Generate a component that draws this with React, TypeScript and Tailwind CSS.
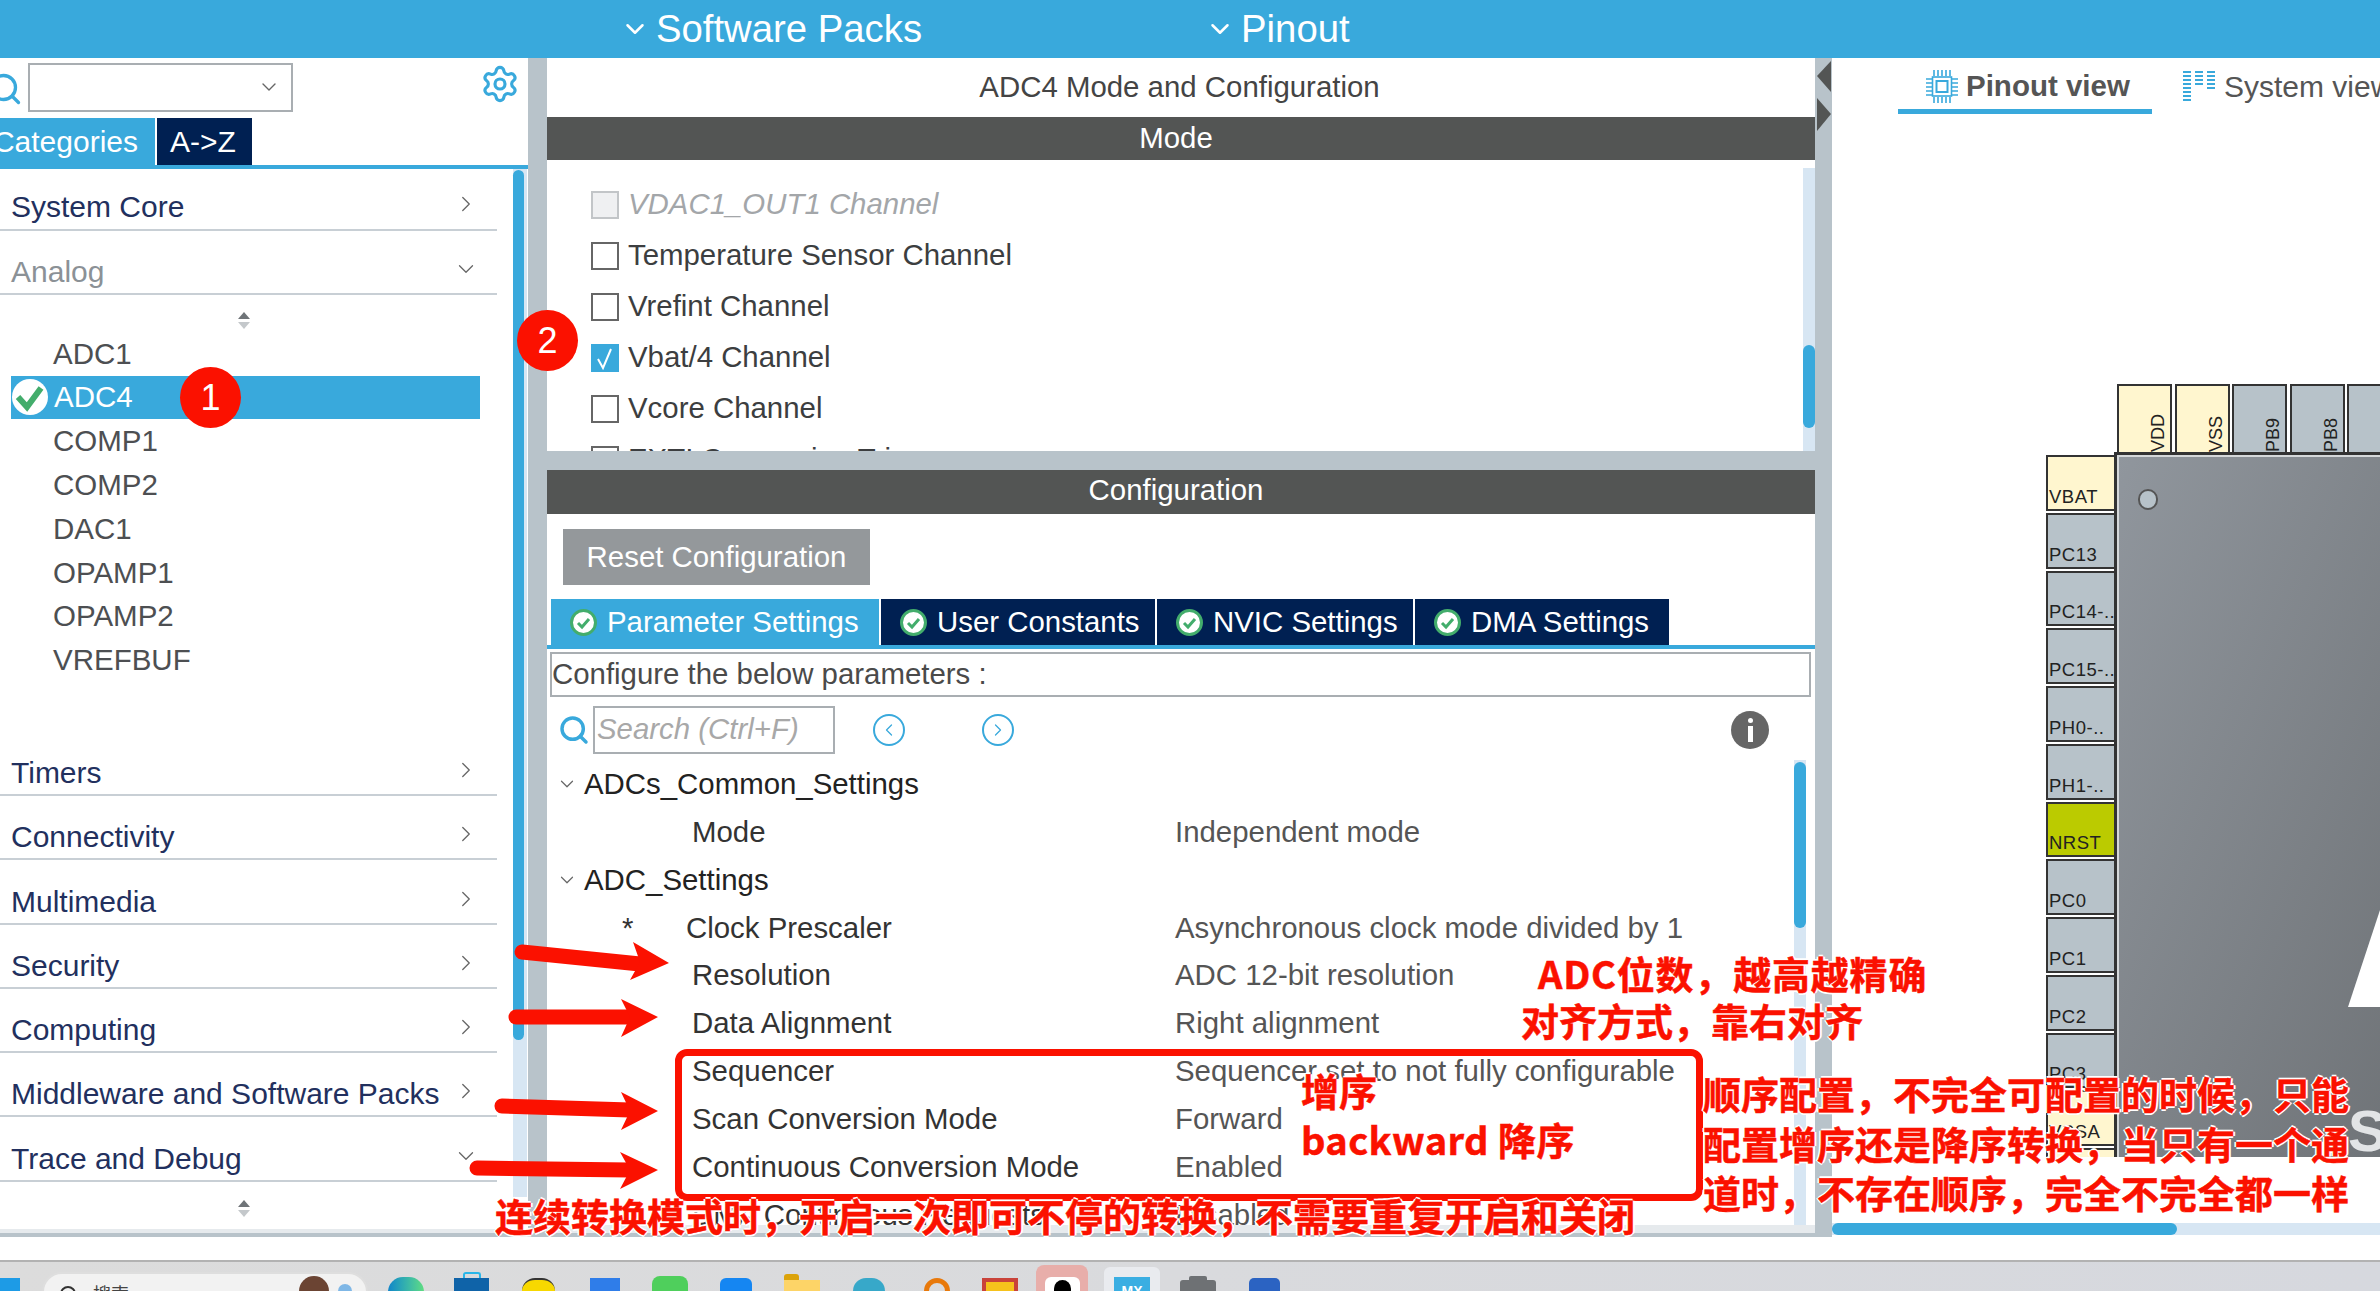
import React from 'react';
import { ChevronDown, ChevronLeft, ChevronRight, Search, Settings } from 'lucide-react';

const categories = ['Timers', 'Connectivity', 'Multimedia', 'Security', 'Computing', 'Middleware and Software Packs'];
const adcItems = ['ADC1', 'ADC4', 'COMP1', 'COMP2', 'DAC1', 'OPAMP1', 'OPAMP2', 'VREFBUF'];
const modeRows = ['Temperature Sensor Channel', 'Vrefint Channel', 'Vbat/4 Channel', 'Vcore Channel', 'EXTI Conversion Trigger'];
const leftPins = ['VBAT', 'PC13', 'PC14-..', 'PC15-..', 'PH0-..', 'PH1-..', 'NRST', 'PC0', 'PC1', 'PC2', 'PC3', 'VSSA', 'VDDA'];
const topPins = ['VDD', 'VSS', 'PB9', 'PB8', ''];
const paramRows = [
  { name: 'Resolution', value: 'ADC 12-bit resolution' },
  { name: 'Data Alignment', value: 'Right alignment' },
  { name: 'Sequencer', value: 'Sequencer set to not fully configurable' },
  { name: 'Scan Conversion Mode', value: 'Forward' },
  { name: 'Continuous Conversion Mode', value: 'Enabled' },
  { name: 'DMA Continuous Requests', value: 'Disabled' },
];

const SortArrows = () => (
  <svg width="14" height="17" viewBox="0 0 14 17">
    <polygon points="7,0 13,7 1,7" fill="#6f7478" />
    <polygon points="7,17 13,10 1,10" fill="#c4c8cb" />
  </svg>
);

const OkIcon = ({ size = 27 }: { size?: number }) => (
  <svg width={size} height={size} viewBox="0 0 27 27" className="shrink-0">
    <circle cx="13.5" cy="13.5" r="12" fill="#fff" stroke="#43ad6c" strokeWidth="3" />
    <path d="M8 14l4 4 7-8" fill="none" stroke="#43ad6c" strokeWidth="3" />
  </svg>
);

const Category = ({ label, first, open, muted }: { label: string; first?: boolean; open?: boolean; muted?: boolean }) => (
  <div className={`flex items-end justify-between border-b-2 border-[#c8cfd5] pl-[11px] pr-[18px] ${first ? 'h-[61.5px] pb-[5px]' : 'h-[64.3px] pb-[4px]'}`}>
    <span className={`text-[30px] leading-[34px] ${muted ? 'text-[#8b9196]' : 'text-[#22305e]'}`}>{label}</span>
    {open ? (
      <ChevronDown size={26} strokeWidth={1.2} className="mb-[7px] text-[#666]" />
    ) : (
      <ChevronRight size={26} strokeWidth={1.2} className="mb-[7px] text-[#666]" />
    )}
  </div>
);

const Sidebar = () => (
  <div className="flex w-[528px] shrink-0 flex-col overflow-hidden bg-white">
    <div className="flex h-[60px] items-center">
      <Search size={36} strokeWidth={2.2} className="-ml-[13px] mt-[2px] text-[#39a9dc]" />
      <div className="ml-[5px] -mt-[2px] flex h-[49px] w-[265px] items-center justify-end border-2 border-[#a9aeb2] pr-[10px]">
        <ChevronDown size={24} strokeWidth={1.4} className="text-[#666]" />
      </div>
      <Settings size={40} strokeWidth={1.9} className="ml-[187px] -mt-[8px] text-[#39a9dc]" />
    </div>
    <div className="flex h-[47px] text-[30px] leading-[47px] text-white">
      <div className="flex w-[155px] justify-end bg-[#39a9dc] pr-[17px]">Categories</div>
      <div className="ml-[2px] w-[95px] bg-[#002052] pr-[3px] text-center">A-&gt;Z</div>
    </div>
    <div className="h-[4px] bg-[#39a9dc]" />
    <div className="flex min-h-0 flex-1">
      <div className="w-[497px] shrink-0">
        <Category label="System Core" first />
        <Category label="Analog" open muted />
        <div className="flex h-[37px] justify-center pt-[17px]">
          <div className="-ml-[10px]"><SortArrows /></div>
        </div>
        {adcItems.map((item) =>
          item === 'ADC4' ? (
            <div key={item} className="ml-[11px] flex h-[43.8px] w-[469px] items-center bg-[#39a9dc] text-[29.5px] text-white">
              <svg width="36" height="36" viewBox="0 0 36 36" className="ml-[1px]">
                <circle cx="18" cy="18" r="18" fill="#fff" />
                <path d="M6 18l9 10L29 9" fill="none" stroke="#43ad6c" strokeWidth="6" />
              </svg>
              <span className="ml-[6px]">{item}</span>
            </div>
          ) : (
            <div key={item} className="flex h-[43.8px] items-center pl-[53px] text-[29.5px] text-[#4d4f52]">
              {item}
            </div>
          )
        )}
        <div className="h-[49.5px]" />
        {categories.map((c) => (
          <Category key={c} label={c} />
        ))}
        <Category label="Trace and Debug" open />
        <div className="flex justify-center pt-[18px]">
          <div className="-ml-[10px]"><SortArrows /></div>
        </div>
      </div>
      <div className="relative ml-[16px] h-[1028px] w-[14px] bg-[#d7e6f3]">
        <div className="mt-[1px] h-[870px] w-[11px] rounded-full bg-[#39a9dc]" />
      </div>
    </div>
    <div className="h-[4px] bg-[#e6eaed]" />
    <div className="h-[4px] bg-[#b8c3ca]" />
  </div>
);

const ModeCheck = ({ label, state }: { label: string; state?: 'on' | 'off' }) => (
  <div className="flex h-[51px] items-center pl-[44px]">
    {state === 'on' ? (
      <div className="flex h-[28px] w-[28px] items-center justify-center bg-[#39a9dc]">
        <svg width="20" height="24" viewBox="0 0 20 24">
          <path d="M3 13l5 9L16 3" fill="none" stroke="#fff" strokeWidth="2" />
        </svg>
      </div>
    ) : (
      <div className="h-[28px] w-[28px] border-2 border-[#666]" />
    )}
    <span className="ml-[9px] text-[29.4px] text-[#3c3e40]">{label}</span>
  </div>
);

const ParamRow = ({ name, value }: { name: string; value: string }) => (
  <div className="flex h-[47.9px] items-center pl-[145px] text-[29.4px]">
    <span className="w-[483px] text-[#333]">{name}</span>
    <span className="text-[#555]">{value}</span>
  </div>
);

const ConfigTab = ({ label, active, width, gap }: { label: string; active?: boolean; width: string; gap: string }) => (
  <div className={`flex items-center pl-[19px] text-[29.4px] text-white ${width} ${gap} ${active ? 'bg-[#39a9dc]' : 'bg-[#002052]'}`}>
    <OkIcon />
    <span className="ml-[10px]">{label}</span>
  </div>
);

const CenterPane = () => (
  <div className="flex w-[1268px] shrink-0 flex-col overflow-hidden bg-[#b8c3ca]">
    <div className="flex h-[59px] items-center justify-center bg-white pb-[1px] pr-[3px] text-[29.4px] text-[#444]">
      ADC4 Mode and Configuration
    </div>
    <div className="flex h-[43px] items-center justify-center bg-[#535554] pb-[1px] pr-[10px] text-[29.4px] text-white">Mode</div>
    <div className="flex h-[291px] bg-white">
      <div className="h-full flex-1 overflow-hidden pt-[19px]">
        <div className="flex h-[51px] items-center pl-[44px]">
          <div className="h-[28px] w-[28px] border-2 border-[#c2c5c8] bg-[#eff0f2]" />
          <span className="ml-[9px] text-[29.4px] italic text-[#a3a6a9]">VDAC1_OUT1 Channel</span>
        </div>
        {modeRows.map((row) => (
          <ModeCheck key={row} label={row} state={row.startsWith('Vbat') ? 'on' : 'off'} />
        ))}
      </div>
      <div className="mt-[8px] w-[12px] bg-[#d7e6f3]">
        <div className="mt-[177px] h-[83px] rounded-full bg-[#39a9dc]" />
      </div>
    </div>
    <div className="h-[19px]" />
    <div className="flex h-[44px] items-center justify-center bg-[#535554] pb-[3px] pr-[10px] text-[29.4px] text-white">Configuration</div>
    <div className="flex min-h-0 flex-1 flex-col overflow-hidden bg-white">
      <div className="ml-[16px] mt-[15px] flex h-[56px] w-[307px] items-center justify-center bg-[#94989b] text-[29.4px] text-white">
        Reset Configuration
      </div>
      <div className="ml-[4px] mt-[14px] flex h-[46px]">
        <ConfigTab label="Parameter Settings" active width="w-[328px]" gap="mr-[2px]" />
        <ConfigTab label="User Constants" width="w-[274px]" gap="mr-[2px]" />
        <ConfigTab label="NVIC Settings" width="w-[256px]" gap="mr-[2px]" />
        <ConfigTab label="DMA Settings" width="w-[254px]" gap="mr-0" />
      </div>
      <div className="h-[4px] bg-[#39a9dc]" />
      <div className="ml-[3px] mt-[3px] flex h-[45px] w-[1261px] items-center border-2 border-[#a9aeb2] pb-[1px] text-[29.4px] text-[#4a4a4a]">
        Configure the below parameters :
      </div>
      <div className="mt-[9px] flex h-[48px] items-center">
        <Search size={32} strokeWidth={2.6} className="ml-[11px] text-[#39a9dc]" />
        <div className="ml-[3px] flex h-[48px] w-[242px] items-center border-2 border-[#a9aeb2] pb-[1px] pl-[2px] text-[29.4px] italic text-[#a8a8a8]">
          Search (Ctrl+F)
        </div>
        <div className="ml-[38px] flex h-[32px] w-[32px] items-center justify-center rounded-full border-2 border-[#39a9dc]">
          <ChevronLeft size={20} strokeWidth={1.5} className="text-[#39a9dc]" />
        </div>
        <div className="ml-[77px] flex h-[32px] w-[32px] items-center justify-center rounded-full border-2 border-[#39a9dc]">
          <ChevronRight size={20} strokeWidth={1.5} className="text-[#39a9dc]" />
        </div>
        <div className="ml-[717px] flex h-[38px] w-[38px] flex-col items-center justify-center rounded-full bg-[#666]">
          <div className="h-[5px] w-[5px] rounded-full bg-white" />
          <div className="mt-[3px] h-[16px] w-[5px] bg-white" />
        </div>
      </div>
      <div className="mt-[6px] flex min-h-0 flex-1">
        <div className="w-[1247px] shrink-0 overflow-hidden">
          <div className="flex h-[47.9px] items-center pl-[9px] text-[29.4px] text-[#222]">
            <ChevronDown size={22} strokeWidth={1.3} className="text-[#666]" />
            <span className="ml-[6px]">ADCs_Common_Settings</span>
          </div>
          <ParamRow name="Mode" value="Independent mode" />
          <div className="flex h-[47.9px] items-center pl-[9px] text-[29.4px] text-[#222]">
            <ChevronDown size={22} strokeWidth={1.3} className="text-[#666]" />
            <span className="ml-[6px]">ADC_Settings</span>
          </div>
          <div className="flex h-[47.9px] items-center pl-[75px] text-[29.4px]">
            <span className="w-[64px] text-[#333]">*</span>
            <span className="w-[489px] text-[#333]">Clock Prescaler</span>
            <span className="text-[#555]">Asynchronous clock mode divided by 1</span>
          </div>
          {paramRows.map((row) => (
            <ParamRow key={row.name} name={row.name} value={row.value} />
          ))}
        </div>
        <div className="w-[12px] bg-[#d7e6f3]">
          <div className="mt-[2px] h-[166px] rounded-full bg-[#39a9dc]" />
        </div>
      </div>
    </div>
    <div className="h-[8px] bg-[#e6eaed]" />
    <div className="h-[4px] bg-[#b8c3ca]" />
  </div>
);

const MiddleGutter = () => (
  <div className="flex w-[17px] shrink-0 flex-col bg-[#b8c3ca] pt-[3px]">
    <svg width="17" height="70" viewBox="0 0 17 70" className="ml-[2px]">
      <polygon points="14,0 14,31 0,15" fill="#535554" />
      <polygon points="0,37 0,70 14,53" fill="#535554" />
    </svg>
  </div>
);

const ChipIcon = () => (
  <svg width="32" height="33" viewBox="0 0 32 33" stroke="#39a9dc" fill="none" className="shrink-0">
    <rect x="6.5" y="7" width="19" height="19" strokeWidth="1.6" />
    <rect x="10.5" y="11" width="11" height="11" strokeWidth="2" />
    <path
      strokeWidth="1.6"
      d="M8 0v6M12 0v6M16 0v6M20 0v6M24 0v6M8 27v6M12 27v6M16 27v6M20 27v6M24 27v6M0 9h6M0 13h6M0 17h6M0 21h6M0 25h6M26 9h6M26 13h6M26 17h6M26 21h6M26 25h6"
    />
  </svg>
);

const SystemIcon = () => (
  <svg width="32" height="31" viewBox="0 0 32 31" stroke="#39a9dc" strokeWidth="1.8" fill="none" className="shrink-0">
    <path d="M0 1h8M0 5h8M0 9h8M0 13h8M0 17h8M0 21h8M0 25h8M0 29h8M12 1h8M12 5h8M12 9h8M12 13h8M24 1h8M24 5h8M24 9h8M24 13h8M24 17h8" />
  </svg>
);

const pinTone = (label: string) => {
  if (label === 'NRST') return 'bg-[#bbcb00]';
  if (label === 'VBAT' || label === 'VSSA' || label === 'VDDA') return 'bg-[#fff6cf]';
  return 'bg-[#b7c2c9]';
};

const RightPane = () => (
  <div className="flex min-w-0 flex-1 flex-col overflow-hidden bg-white">
    <div className="flex h-[56px] shrink-0 pl-[66px]">
      <div className="flex h-[56px] w-[254px] shrink-0 items-center border-b-[5px] border-[#39a9dc] pl-[28px] pt-[6px]">
        <ChipIcon />
        <span className="ml-[8px] whitespace-nowrap text-[29.5px] font-bold text-[#555]">Pinout view</span>
      </div>
      <div className="ml-[31px] flex h-[51px] shrink-0 items-center whitespace-nowrap pt-[6px]">
        <SystemIcon />
        <span className="ml-[9px] text-[30px] text-[#555]">System view</span>
      </div>
    </div>
    <div className="relative min-h-0 flex-1 overflow-hidden">
      <div className="absolute left-[285px] top-[270px] flex h-[68px] gap-[2.5px]">
        {topPins.map((pin) => (
          <div
            key={pin || 'blank'}
            className={`flex w-[55px] items-end justify-end border-2 border-b-0 border-[#333] pr-[2px] ${pin === 'VDD' || pin === 'VSS' ? 'bg-[#fff6cf]' : 'bg-[#b7c2c9]'}`}
          >
            <span className="rotate-180 text-[18px] leading-[20px] text-[#222] [writing-mode:vertical-rl]">{pin}</span>
          </div>
        ))}
      </div>
      <div className="absolute left-[214px] top-[341px] flex h-[702px] flex-col gap-[2px] overflow-hidden">
        {leftPins.map((pin) => (
          <div
            key={pin}
            className={`flex h-[55.75px] w-[68px] shrink-0 items-end border-2 border-r-0 border-[#333] pb-[1px] pl-[1px] text-[18.5px] leading-[22px] tracking-[0.5px] text-[#222] ${pinTone(pin)}`}
          >
            {pin}
          </div>
        ))}
      </div>
      <div className="absolute left-[282px] top-[338px] h-[705px] w-[300px] border-l-[3px] border-t-[3px] border-[#333]">
        <div className="relative h-full overflow-hidden border-l-2 border-t-2 border-[#d5d8da] bg-gradient-to-br from-[#90969d] to-[#6e7276]">
          <div className="absolute left-[19px] top-[32px] h-[21px] w-[20px] rounded-full border-2 border-[#555] bg-[#b7c2c9]" />
          <svg width="36" height="98" viewBox="0 0 36 98" className="absolute left-[229px] top-[453px]">
            <polygon points="32,0 0,97 32,97" fill="#fff" />
          </svg>
          <span className="absolute left-[229px] top-[645px] text-[58px] font-bold leading-none text-[#e2e4e6]">S</span>
        </div>
      </div>
    </div>
    <div className="mb-[2px] h-[12px] shrink-0 bg-[#d7e6f3]">
      <div className="h-full w-[345px] rounded-full bg-[#39a9dc]" />
    </div>
  </div>
);

const TaskBar = () => (
  <div className="flex h-[31px] items-start overflow-hidden border-t-2 border-[#b2b2b2] bg-gradient-to-r from-[#dcdcdc] to-[#d6d8de]">
    <div className="mt-[16px] h-[20px] w-[20px] bg-[#1d9be6]" />
    <div className="ml-[22px] mt-[10px] flex h-[40px] w-[326px] rounded-t-[20px] border-2 border-[#dedede] bg-[#f2f2f2] text-[18px] text-[#444]">
      <div className="ml-[16px] mt-[12px] h-[16px] w-[16px] rounded-full border-2 border-[#333]" />
      <span className="ml-[17px] mt-[6px] [font-family:'Noto_Sans_CJK_SC',sans-serif]">搜索</span>
      <div className="ml-[170px] mt-[2px] h-[36px] w-[30px] rounded-t-full bg-[#6b4433]" />
      <div className="ml-[9px] mt-[10px] h-[20px] w-[14px] rounded-t-full bg-[#7fb7e6]" />
    </div>
    <div className="ml-[20px] mt-[15px] h-[30px] w-[36px] rounded-full bg-gradient-to-r from-[#1285c9] to-[#5fdc80]" />
    <div className="ml-[30px] mt-[10px] flex w-[35px] flex-col items-center">
      <div className="h-[6px] w-[18px] rounded-t-[3px] border-2 border-b-0 border-[#29b6e8]" />
      <div className="h-[24px] w-[35px] bg-[#0f63a8]" />
    </div>
    <div className="ml-[33px] mt-[16px] h-[26px] w-[33px] rounded-full border-t-2 border-[#333] bg-[#f7d800]" />
    <div className="ml-[35px] mt-[16px] h-[26px] w-[30px] bg-[#2f7de9]" />
    <div className="ml-[32px] mt-[14px] h-[30px] w-[36px] rounded-[8px] bg-[#4fcf5c]" />
    <div className="ml-[32px] mt-[16px] h-[28px] w-[32px] rounded-[6px] bg-[#1586f2]" />
    <div className="ml-[32px] mt-[12px] flex w-[36px] flex-col">
      <div className="h-[6px] w-[15px] rounded-t-[3px] bg-[#dca30a]" />
      <div className="h-[24px] w-[36px] bg-[#fdd467]" />
    </div>
    <div className="ml-[33px] mt-[16px] h-[26px] w-[32px] rounded-full bg-[#37a8c9]" />
    <div className="ml-[39px] mt-[16px] h-[30px] w-[26px] rounded-t-full border-[5px] border-[#e8790b]" />
    <div className="ml-[32px] mt-[16px] h-[26px] w-[36px] border-x-4 border-t-4 border-[#c9433a] bg-[#f6c21c]" />
    <div className="ml-[18px] mt-[3px] flex h-[40px] w-[52px] justify-center rounded-t-[8px] bg-[#e8aeaa] pt-[12px]">
      <div className="flex h-[30px] w-[35px] justify-center rounded-t-[6px] bg-white pt-[3px]">
        <div className="h-[20px] w-[17px] rounded-t-full bg-black" />
      </div>
    </div>
    <div className="ml-[16px] mt-[5px] flex h-[40px] w-[56px] justify-center rounded-t-[6px] bg-[#e9ebef] pt-[10px]">
      <div className="h-[30px] w-[36px] bg-[#3aaee2] text-center text-[14px] font-bold leading-[28px] text-white">MX</div>
    </div>
    <div className="ml-[20px] mt-[14px] flex w-[36px] flex-col items-center">
      <div className="h-[4px] w-[18px] rounded-t-[2px] bg-[#6e7174]" />
      <div className="h-[24px] w-[36px] rounded-t-[3px] bg-[#6e7174]" />
    </div>
    <div className="ml-[33px] mt-[16px] h-[26px] w-[31px] rounded-[5px] bg-[#2b63c2]" />
  </div>
);

const Note = ({ className, children }: { className: string; children: React.ReactNode }) => (
  <div
    className={`absolute whitespace-nowrap text-[38px] font-bold leading-[46px] text-[#fb1100] [-webkit-text-stroke:0.5px_#fb1100] [font-family:'Noto_Sans_CJK_SC',sans-serif] [text-shadow:2px_0_0_#fff,-2px_0_0_#fff,0_2px_0_#fff,0_-2px_0_#fff] ${className}`}
  >
    {children}
  </div>
);

const Arrow = ({ tail, neck, head }: { tail: string; neck: string; head: string }) => (
  <>
    <polyline points={`${tail} ${neck}`} fill="none" stroke="#fb1100" strokeWidth="15" strokeLinecap="round" />
    <polygon points={head} fill="#fb1100" />
  </>
);

const Badge = ({ n, className }: { n: number; className: string }) => (
  <div className={`absolute flex h-[61px] w-[61px] items-center justify-center rounded-full bg-[#fb1100] text-[36px] text-white ${className}`}>
    {n}
  </div>
);

export default function App() {
  return (
    <div className="relative flex h-[1291px] w-[2380px] flex-col overflow-hidden bg-white [font-family:'Liberation_Sans','Noto_Sans_CJK_SC',sans-serif]">
      <div className="flex h-[58px] shrink-0 items-center bg-[#39a9dc] text-[38.3px] text-white">
        <ChevronDown size={30} strokeWidth={2} className="ml-[620px]" />
        <span className="ml-[6px]">Software Packs</span>
        <ChevronDown size={30} strokeWidth={2} className="ml-[283px]" />
        <span className="ml-[6px]">Pinout</span>
      </div>
      <div className="flex h-[1179px] shrink-0">
        <Sidebar />
        <div className="w-[19px] shrink-0 bg-[#b8c3ca]" />
        <CenterPane />
        <MiddleGutter />
        <RightPane />
      </div>
      <div className="h-[23px] shrink-0 bg-white" />
      <TaskBar />

      {/* 批注层 */}
      <Badge n={1} className="left-[180px] top-[367px]" />
      <Badge n={2} className="left-[517px] top-[310px]" />
      <div className="absolute left-[675px] top-[1049px] h-[152px] w-[1028px] rounded-[12px] border-[7px] border-[#fb1100]" />
      <svg viewBox="0 0 2380 1291" className="pointer-events-none absolute left-0 top-0 h-[1291px] w-[2380px]">
        <Arrow tail="522,952" neck="640,964" head="633,942 669,963 630,980 640,962" />
        <Arrow tail="516,1017" neck="630,1017" head="621,999 658,1017 621,1037 630,1017" />
        <Arrow tail="502,1106" neck="630,1110" head="621,1092 658,1111 621,1130 630,1111" />
        <Arrow tail="477,1168" neck="630,1170" head="620,1152 658,1170 620,1189 630,1170" />
      </svg>
      <Note className="left-[1538px] top-[950px] tracking-[0.8px]">ADC位数，越高越精确</Note>
      <Note className="left-[1521px] top-[997px]">对齐方式，靠右对齐</Note>
      <Note className="left-[1301px] top-[1067px]">增序</Note>
      <Note className="left-[1301px] top-[1116px] tracking-[0.4px]">backward 降序</Note>
      <Note className="left-[1703px] top-[1070px]">顺序配置，不完全可配置的时候，只能</Note>
      <Note className="left-[1703px] top-[1120px]">配置增序还是降序转换，当只有一个通</Note>
      <Note className="left-[1703px] top-[1169px]">道时，不存在顺序，完全不完全都一样</Note>
      <Note className="left-[495px] top-[1192px]">连续转换模式时，开启一次即可不停的转换，不需要重复开启和关闭</Note>
    </div>
  );
}
